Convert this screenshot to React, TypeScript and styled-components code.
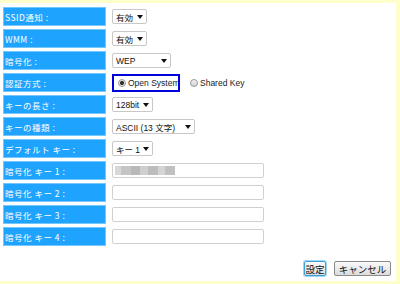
import React from "react";
import styled, { createGlobalStyle } from "styled-components";

const Global = createGlobalStyle`
  html, body { margin: 0; padding: 0; background: #ffffff; }
  body { font-family: "Liberation Sans", "Noto Sans CJK JP", sans-serif; }
`;

const Frame = styled.div`
  box-sizing: border-box;
  width: 400px;
  height: 284px;
  border-top: 3px solid #ffffcc;
  border-right: 4px solid #ffffcc;
  border-bottom: 3px solid #ffffcc;
  padding: 4px 0 0 3px;
  display: flex;
  flex-direction: column;
`;

const Form = styled.div`
  display: grid;
  grid-template-columns: 103px 1fr;
  column-gap: 6px;
  row-gap: 3px;
  grid-auto-rows: 19px;
`;

const Label = styled.div`
  box-sizing: border-box;
  background: #1ea4ff;
  border: 1px solid #74c6ff;
  color: #ffffff;
  font-family: "Noto Sans CJK JP", sans-serif;
  font-size: 8.5px;
  letter-spacing: 0.5px;
  display: flex;
  align-items: center;
  padding-left: 1px;
  white-space: nowrap;
`;

const Cell = styled.div`
  display: flex;
  align-items: center;
  gap: 10px;
`;

const Select = styled.div<{ w: number }>`
  box-sizing: border-box;
  flex: 0 0 auto;
  width: ${(p) => p.w}px;
  height: 15px;
  border: 1px solid #c8c8c8;
  border-radius: 2px;
  background: #fff;
  display: flex;
  align-items: center;
  justify-content: space-between;
  padding: 0 3px 0 3px;
  font-family: "Liberation Sans", "Noto Sans CJK JP", sans-serif;
  font-size: 8.5px;
  color: #111;
  white-space: nowrap;
  overflow: hidden;
`;

const Arrow = () => (
  <svg width="6" height="4" viewBox="0 0 6 4" style={{ flex: "0 0 auto" }}>
    <path d="M0 0 L6 0 L3 4 Z" fill="#111" />
  </svg>
);

const RadioFocus = styled.div`
  box-sizing: border-box;
  height: 18px;
  width: 68px;
  border: 2px solid #0000dd;
  display: flex;
  align-items: center;
  padding: 0 0 0 4px;
  overflow: hidden;
`;

const RadioItem = styled.div`
  display: flex;
  align-items: center;
  gap: 2px;
  font-family: "Liberation Sans", sans-serif;
  font-size: 8.5px;
  color: #222;
  white-space: nowrap;
`;

const RadioCircle = styled.span<{ on?: boolean }>`
  box-sizing: border-box;
  flex: 0 0 auto;
  width: 8px;
  height: 8px;
  border-radius: 50%;
  border: 1px solid #9a9a9a;
  background: ${(p) =>
    p.on ? "radial-gradient(circle, #333 0 1.8px, #e8e8e8 2.3px)" : "linear-gradient(#f4f4f4, #d0d0d0)"};
`;

const TextInput = styled.div`
  box-sizing: border-box;
  width: 152px;
  height: 15px;
  border: 1px solid #d0d0d0;
  border-radius: 2px;
  background: #fff;
  display: flex;
  align-items: center;
  padding: 1px 2px;
`;

const Blur = styled.div`
  display: flex;
  height: 9px;
`;

const BlurBlock = styled.span<{ c: string; w: number }>`
  width: ${(p) => p.w}px;
  height: 9px;
  background: ${(p) => p.c};
`;

const Footer = styled.div`
  display: flex;
  justify-content: flex-end;
  gap: 8px;
  padding: 15px 5px 0 0;
`;

const Button = styled.div<{ focused?: boolean }>`
  box-sizing: border-box;
  height: 15px;
  width: ${(p) => (p.focused ? 22 : 57)}px;
  border: 1px solid ${(p) => (p.focused ? "#3aa0d8" : "#8a8a8a")};
  box-shadow: ${(p) => (p.focused ? "0 0 0 1px #9fd6f4" : "none")};
  border-radius: 2px;
  background: linear-gradient(#fafafa, #dcdcdc);
  font-family: "Noto Sans CJK JP", sans-serif;
  font-size: 9.5px;
  color: #111;
  display: flex;
  align-items: center;
  justify-content: center;
  white-space: nowrap;
`;

const blur = [
  { c: "#d8d8d8", w: 6 },
  { c: "#c4c4c4", w: 10 },
  { c: "#b8b8b8", w: 9 },
  { c: "#cfcfcf", w: 8 },
  { c: "#bdbdbd", w: 10 },
  { c: "#d4d4d4", w: 7 },
  { c: "#c0c0c0", w: 10 },
];

export default function App() {
  return (
    <>
      <Global />
      <Frame>
        <Form>
          <Label>SSID通知 :</Label>
          <Cell>
            <Select w={35}>有効<Arrow /></Select>
          </Cell>

          <Label>WMM :</Label>
          <Cell>
            <Select w={35}>有効<Arrow /></Select>
          </Cell>

          <Label>暗号化 :</Label>
          <Cell>
            <Select w={59}>WEP<Arrow /></Select>
          </Cell>

          <Label>認証方式 :</Label>
          <Cell>
            <RadioFocus>
              <RadioItem>
                <RadioCircle on />
                Open System
              </RadioItem>
            </RadioFocus>
            <RadioItem>
              <RadioCircle />
              Shared Key
            </RadioItem>
          </Cell>

          <Label>キーの長さ :</Label>
          <Cell>
            <Select w={41}>128bit<Arrow /></Select>
          </Cell>

          <Label>キーの種類 :</Label>
          <Cell>
            <Select w={83}>ASCII (13 文字)<Arrow /></Select>
          </Cell>

          <Label>デフォルト キー :</Label>
          <Cell>
            <Select w={41}>キー 1<Arrow /></Select>
          </Cell>

          <Label>暗号化 キー 1 :</Label>
          <Cell>
            <TextInput>
              <Blur>
                {blur.map((b, i) => (
                  <BlurBlock key={i} c={b.c} w={b.w} />
                ))}
              </Blur>
            </TextInput>
          </Cell>

          <Label>暗号化 キー 2 :</Label>
          <Cell>
            <TextInput />
          </Cell>

          <Label>暗号化 キー 3 :</Label>
          <Cell>
            <TextInput />
          </Cell>

          <Label>暗号化 キー 4 :</Label>
          <Cell>
            <TextInput />
          </Cell>
        </Form>
        <Footer>
          <Button focused>設定</Button>
          <Button>キャンセル</Button>
        </Footer>
      </Frame>
    </>
  );
}
